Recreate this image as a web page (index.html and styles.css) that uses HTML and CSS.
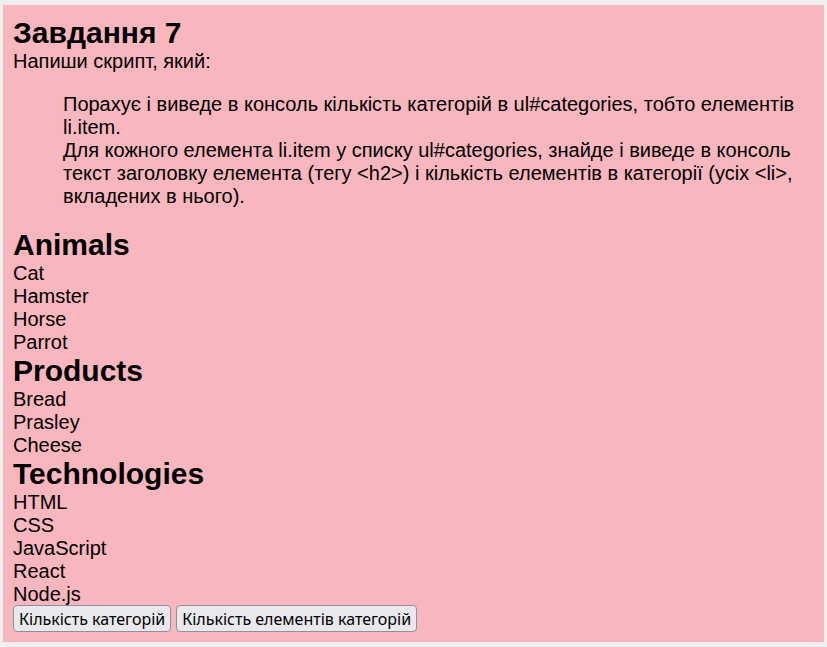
FILE: index.html
```html
<!DOCTYPE html>
<html lang="uk">
<head>
<meta charset="utf-8">
<title>Завдання 7</title>
<link rel="stylesheet" href="styles.css">
</head>
<body>
<main class="task">
<h2>Завдання 7</h2>
<p>Напиши скрипт, який:</p>
<ul class="brief">
<li>Порахує і виведе в консоль кількість категорій в ul#categories, тобто елементів li.item.</li>
<li>Для кожного елемента li.item у списку ul#categories, знайде і виведе в консоль текст заголовку елемента (тегу &lt;h2&gt;) і кількість елементів в категорії (усіх &lt;li&gt;, вкладених в нього).</li>
</ul>
<ul id="categories">
<li class="item"><h2>Animals</h2>
<ul><li>Cat</li><li>Hamster</li><li>Horse</li><li>Parrot</li></ul></li>
<li class="item"><h2>Products</h2>
<ul><li>Bread</li><li>Prasley</li><li>Cheese</li></ul></li>
<li class="item"><h2>Technologies</h2>
<ul><li>HTML</li><li>CSS</li><li>JavaScript</li><li>React</li><li>Node.js</li></ul></li>
</ul>
<div class="actions">
<button type="button">Кількість категорій</button>
<button type="button">Кількість елементів категорій</button>
</div>
</main>
</body>
</html>
```
FILE: styles.css
```css
* { box-sizing: border-box; }

body {
  margin: 0;
  padding: 5px 3px;
  background: #efefef;
  color: #000;
  font: 20px/23px "Liberation Sans", Arial, sans-serif;
}

h2, p, ul { margin: 0; padding: 0; }
ul { list-style: none; }

h2 {
  font-size: 30px;
  line-height: 34px;
}

.task {
  padding: 11px 10px 10px;
  background: #f8b6be;
}

.brief { margin: 20px 0; padding: 0 0 0 50px; }

.actions { display: flex; gap: 5px; margin-top: -1px; }

button {
  height: 27px;
  padding: 0 5px;
  border: 1px solid #8f8f9d;
  border-radius: 4px;
  background: #e9e9ed;
  color: #000;
  font: 16px/20px "Noto Sans", sans-serif;
}
```
